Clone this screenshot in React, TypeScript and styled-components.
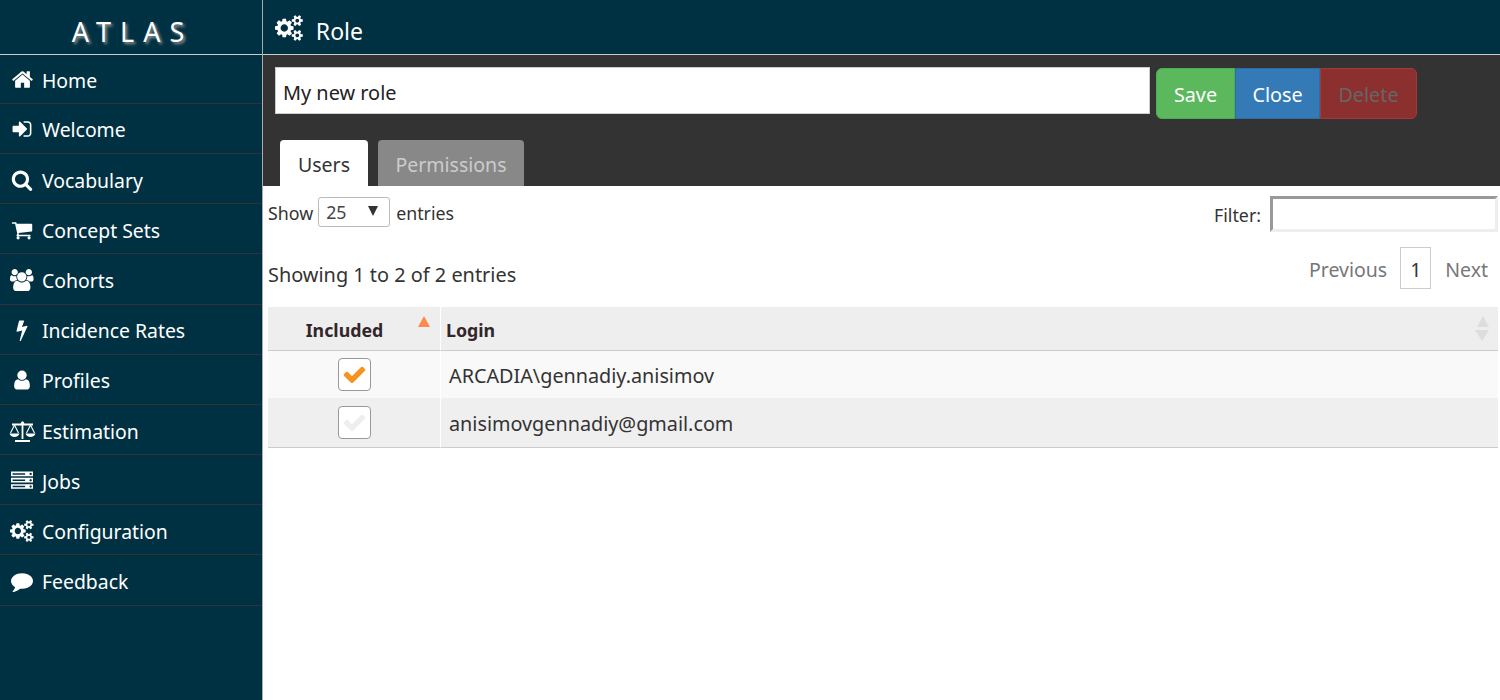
import React from "react";
import styled, { createGlobalStyle } from "styled-components";

const Global = createGlobalStyle`
  html, body { margin: 0; padding: 0; height: 100%; background: #fff; }
  #root { height: 700px; overflow: hidden; }
  * { box-sizing: border-box; }
  body { font-family: "Noto Sans", "Open Sans", sans-serif; }
`;

type IconDef = { w: number; d: string };
const icons: Record<string, IconDef> = {
  home: { w: 1792, d: "M1472 992v480q0 26-19 45t-45 19h-384v-384h-256v384h-384q-26 0-45-19t-19-45v-480q0-1 .5-3t.5-3l575-474 575 474q1 2 1 6zm223-69l-62 74q-8 9-21 11h-3q-13 0-21-7l-692-577-692 577q-12 8-24 7-13-2-21-11l-62-74q-8-10-7-23.5t11-21.5l719-599q32-26 76-26t76 26l244 204v-195q0-14 9-23t23-9h192q14 0 23 9t9 23v408l219 182q10 8 11 21.5t-7 23.5z" },
  signIn: { w: 1792, d: "M1312 896q0 26-19 45l-544 544q-19 19-45 19t-45-19-19-45v-288h-448q-26 0-45-19t-19-45v-384q0-26 19-45t45-19h448v-288q0-26 19-45t45-19 45 19l544 544q19 19 19 45zm352-352v704q0 119-84.5 203.5t-203.5 84.5h-320q-13 0-22.5-9.5t-9.5-22.5q0-4-1-20t-.5-26.5 3-23.5 10-19.5 20.5-6.5h320q66 0 113-47t47-113v-704q0-66-47-113t-113-47h-312l-11.5-1-11.5-3-8-5.5-7-9-2-13.5q0-4-1-20t-.5-26.5 3-23.5 10-19.5 20.5-6.5h320q119 0 203.5 84.5t84.5 203.5z" },
  search: { w: 1792, d: "M1216 832q0-185-131.5-316.5t-316.5-131.5-316.5 131.5-131.5 316.5 131.5 316.5 316.5 131.5 316.5-131.5 131.5-316.5zm512 832q0 52-38 90t-90 38q-54 0-90-38l-343-342q-179 124-399 124-143 0-273.5-55.5t-225-150-150-225-55.5-273.5 55.5-273.5 150-225 225-150 273.5-55.5 273.5 55.5 225 150 150 225 55.5 273.5q0 220-124 399l343 343q37 37 37 90z" },
  cart: { w: 1792, d: "M704 1536q0 52-38 90t-90 38-90-38-38-90 38-90 90-38 90 38 38 90zm896 0q0 52-38 90t-90 38-90-38-38-90 38-90 90-38 90 38 38 90zm128-1088v512q0 24-16.5 42.5t-40.5 21.5l-1044 122q13 60 13 70 0 16-24 64h920q26 0 45 19t19 45-19 45-45 19h-1024q-26 0-45-19t-19-45q0-11 8-31.5t16-36 21.5-40 15.5-29.5l-177-823h-204q-26 0-45-19t-19-45 19-45 45-19h256q16 0 28.5 6.5t19.5 15.5 13 24.5 8 26 5.5 29.5 4.5 26h1201q26 0 45 19t19 45z" },
  users: { w: 1920, d: "M593 896q-162 5-265 128h-134q-82 0-138-40.5t-56-118.5q0-353 124-353 6 0 43.5 21t97.5 42.5 119 21.5q67 0 133-23-5 37-5 66 0 139 81 256zm1071 637q0 120-73 189.5t-194 69.5h-874q-121 0-194-69.5t-73-189.5q0-53 3.5-103.5t14-109 26.5-108.5 43-97.5 62-81 85.5-53.5 111.5-20q10 0 43 21.5t73 48 107 48 135 21.5 135-21.5 107-48 73-48 43-21.5q61 0 111.5 20t85.5 53.5 62 81 43 97.5 26.5 108.5 14 109 3.5 103.5zm-1024-1277q0 106-75 181t-181 75-181-75-75-181 75-181 181-75 181 75 75 181zm704 384q0 159-112.5 271.5t-271.5 112.5-271.5-112.5-112.5-271.5 112.5-271.5 271.5-112.5 271.5 112.5 112.5 271.5zm576 225q0 78-56 118.5t-138 40.5h-134q-103-123-265-128 81-117 81-256 0-29-5-66 66 23 133 23 59 0 119-21.5t97.5-42.5 43.5-21q124 0 124 353zm-128-609q0 106-75 181t-181 75-181-75-75-181 75-181 181-75 181 75 75 181z" },
  bolt: { w: 1792, d: "M1333 566q18 20 7 44l-540 1157q-13 25-42 25-4 0-14-2-17-5-25.5-19t-4.5-30l197-808-406 101q-4 1-12 1-18 0-31-11-18-15-13-39l201-825q4-14 16-23t28-9h328q19 0 32 12.5t13 29.5q0 8-5 18l-171 463 396-98q8-2 12-2 19 0 34 15z" },
  user: { w: 1792, d: "M1536 1399q0 109-62.5 187t-150.5 78h-854q-88 0-150.5-78t-62.5-187q0-85 8.5-160.5t31.5-152 58.5-131 94-89 134.5-34.5q131 128 313 128t313-128q76 0 134.5 34.5t94 89 58.5 131 31.5 152 8.5 160.5zm-256-887q0 159-112.5 271.5t-271.5 112.5-271.5-112.5-112.5-271.5 112.5-271.5 271.5-112.5 271.5 112.5 112.5 271.5z" },
  server: { w: 1792, d: "M128 1408h1024v-128h-1024v128zm0-512h1024v-128h-1024v128zm1568 448q0-40-28-68t-68-28-68 28-28 68 28 68 68 28 68-28 28-68zm-1568-960h1024v-128h-1024v128zm1568 448q0-40-28-68t-68-28-68 28-28 68 28 68 68 28 68-28 28-68zm0-512q0-40-28-68t-68-28-68 28-28 68 28 68 68 28 68-28 28-68zm96 832v384h-1792v-384h1792zm0-512v384h-1792v-384h1792zm0-512v384h-1792v-384h1792z" },
  cogs: { w: 1920, d: "M896 896q0-106-75-181t-181-75-181 75-75 181 75 181 181 75 181-75 75-181zm768 512q0-52-38-90t-90-38-90 38-38 90q0 53 37.5 90.5t90.5 37.5 90.5-37.5 37.5-90.5zm0-1024q0-52-38-90t-90-38-90 38-38 90q0 53 37.5 90.5t90.5 37.5 90.5-37.5 37.5-90.5zm-384 421v185q0 10-7 19.5t-16 10.5l-155 24q-11 35-32 76 34 48 90 115 7 11 7 20 0 12-7 19-23 30-82.5 89.5t-78.5 59.5q-11 0-21-7l-115-90q-37 19-77 31-11 108-23 155-7 24-30 24h-186q-11 0-20-7.5t-10-17.5l-23-153q-34-10-75-31l-118 89q-7 7-20 7-11 0-21-8-144-133-144-160 0-9 7-19 10-14 41-53t47-61q-23-44-35-82l-152-24q-10-1-17-9.5t-7-19.5v-185q0-10 7-19.5t16-10.5l155-24q11-35 32-76-34-48-90-115-7-11-7-20 0-12 7-20 22-30 82-89t79-59q11 0 21 7l115 90q34-18 77-32 11-108 23-154 7-24 30-24h186q11 0 20 7.5t10 17.5l23 153q34 10 75 31l118-89q8-7 20-7 11 0 21 8 144 133 144 160 0 8-7 19-12 16-42 54t-45 60q23 48 34 82l152 23q10 2 17 10.5t7 19.5zm640 533v140q0 16-149 31-12 27-30 52 51 113 51 138 0 4-4 7-122 71-124 71-8 0-46-47t-52-68q-20 2-30 2t-30-2q-14 21-52 68t-46 47q-2 0-124-71-4-3-4-7 0-25 51-138-18-25-30-52-149-15-149-31v-140q0-16 149-31 13-29 30-52-51-113-51-138 0-4 4-7 4-2 35-20t59-34 30-16q8 0 46 46.5t52 67.5q20-2 30-2t30 2q51-71 92-112l6-2q4 0 124 70 4 3 4 7 0 25-51 138 17 23 30 52 149 15 149 31zm0-1024v140q0 16-149 31-12 27-30 52 51 113 51 138 0 4-4 7-122 71-124 71-8 0-46-47t-52-68q-20 2-30 2t-30-2q-14 21-52 68t-46 47q-2 0-124-71-4-3-4-7 0-25 51-138-18-25-30-52-149-15-149-31v-140q0-16 149-31 13-29 30-52-51-113-51-138 0-4 4-7 4-2 35-20t59-34 30-16q8 0 46 46.5t52 67.5q20-2 30-2t30 2q51-71 92-112l6-2q4 0 124 70 4 3 4 7 0 25-51 138 17 23 30 52 149 15 149 31z" },
  comment: { w: 1792, d: "M1792 896q0 174-120 321.5t-326 233-450 85.5q-70 0-145-8-198 175-460 242-49 14-114 22-17 2-30.5-9t-17.5-29v-1q-3-4-.5-12t2-10 4.5-9.5l6-9 7-8.5 8-9q7-8 31-34.5t34.5-38 31-39.5 32.5-51 27-59 26-76q-157-89-247.5-220t-90.5-281q0-130 71-248.5t191-204.5 286-136.5 348-50.5q244 0 450 85.5t326 233 120 321.5z" },
  check: { w: 1792, d: "M1671 566q0 40-28 68l-724 724-136 136q-28 28-68 28t-68-28l-136-136-362-362q-28-28-28-68t28-68l136-136q28-28 68-28t68 28l294 295 656-657q28-28 68-28t68 28l136 136q28 28 28 68z" },
};

const Glyph = ({ name, size }: { name: string; size: number }) => {
  const ic = icons[name];
  return (
    <svg width={(size * ic.w) / 1792} height={size} viewBox={`0 0 ${ic.w} 1792`} fill="currentColor">
      <path d={ic.d} />
    </svg>
  );
};

const ScaleIcon = () => (
  <svg width="27" height="22" viewBox="0 0 27 22" fill="none" stroke="currentColor">
    <path d="M13.5 1.5V19M3 4.5h21M6 21h15" strokeWidth="1.8" />
    <path d="M5.5 5L1.5 13M5.5 5l4 8M21.5 5l-4 8M21.5 5l4 8" strokeWidth="1.1" />
    <path d="M0.5 13.5h10c-.6 2.2-2.6 3.5-5 3.5s-4.4-1.3-5-3.5zM16.5 13.5h10c-.6 2.2-2.6 3.5-5 3.5s-4.4-1.3-5-3.5z" fill="currentColor" stroke="none" />
    <circle cx="13.5" cy="3.5" r="1.8" fill="currentColor" stroke="none" />
  </svg>
);

const Page = styled.div`
  display: flex;
  height: 700px;
  width: 1500px;
`;
const Sidebar = styled.nav`
  width: 263px;
  flex: none;
  background: #003142;
  border-right: 1px solid #aaa;
  color: #fff;
`;
const Brand = styled.div`
  height: 55px;
  border-bottom: 1px solid #ccc;
  text-align: center;
  font-size: 27px;
  line-height: 64px;
  letter-spacing: 9px;
  text-shadow: 2px 2px 3px #999;
  color: #fff;
  padding-left: 3px;
`;
const NavItem = styled.a`
  display: flex;
  align-items: center;
  height: 50.2px;
  border-bottom: 1px solid #333;
  font-size: 19.4px;
  color: #fff;
  padding-top: 3px;
  &:nth-child(2) { height: 48.8px; }
`;
const NavIcon = styled.span`
  width: 42px;
  flex: none;
  display: flex;
  justify-content: center;
  padding-left: 2px;
  svg { display: block; margin-top: -1px; }
`;
const Main = styled.main`
  flex: 1;
  min-width: 0;
  display: flex;
  flex-direction: column;
`;
const TitleBar = styled.header`
  height: 55px;
  background: #003142;
  border-bottom: 1px solid #ccc;
  color: #fff;
  display: flex;
  align-items: center;
  gap: 13px;
  padding: 8px 0 0 12px;
  font-size: 23px;
  svg { display: block; margin-top: -6px; }
`;
const Panel = styled.section`
  height: 131px;
  background: #333;
  padding: 12px 12px 0;
  display: flex;
  flex-direction: column;
`;
const FormRow = styled.div`
  display: flex;
  gap: 6px;
  align-items: flex-start;
`;
const NameInput = styled.div`
  width: 875px;
  height: 47px;
  background: #fff;
  border: 1px solid #ccc;
  color: #222;
  font-size: 19.9px;
  line-height: 49px;
  padding-left: 7px;
`;
const ButtonGroup = styled.div`
  display: flex;
  margin-top: 1px;
`;
const Btn = styled.button<{ $bg: string; $border: string; $w: number; $color?: string }>`
  width: ${(p) => p.$w}px;
  height: 51px;
  background: ${(p) => p.$bg};
  border: 1px solid ${(p) => p.$border};
  color: ${(p) => p.$color || "#fff"};
  font: inherit;
  font-size: 19.8px;
  padding: 2px 0 0;
  &:first-child { border-radius: 6px 0 0 6px; }
  &:last-child { border-radius: 0 6px 6px 0; }
`;
const Tabs = styled.div`
  display: flex;
  gap: 10px;
  margin-top: 21px;
  padding-left: 5px;
`;
const Tab = styled.div<{ $active?: boolean; $w: number }>`
  width: ${(p) => p.$w}px;
  height: 46px;
  border-radius: 4px 4px 0 0;
  background: ${(p) => (p.$active ? "#fff" : "#888")};
  color: ${(p) => (p.$active ? "#333" : "#ccc")};
  font-size: 19.5px;
  line-height: 50px;
  text-align: center;
`;
const Content = styled.section`
  flex: 1;
  padding: 10px 2px 0 5px;
  color: #333;
  font-size: 17.8px;
`;
const TopRow = styled.div`
  display: flex;
  justify-content: space-between;
  align-items: center;
  height: 36px;
`;
const LengthControl = styled.div`
  display: flex;
  align-items: center;
  padding-bottom: 2px;
`;
const FilterControl = styled.div`
  display: flex;
  align-items: center;
  padding-top: 1px;
`;
const SelectBox = styled.div`
  position: relative;
  width: 72px;
  height: 30px;
  margin: 0 6px 2px 5px;
  border: 1px solid #bbb;
  border-radius: 3px;
  line-height: 28px;
  padding-left: 7px;
  color: #444;
`;
const Caret = styled.span`
  position: absolute;
  right: 11px;
  top: 8px;
  border-left: 5.5px solid transparent;
  border-right: 5.5px solid transparent;
  border-top: 10px solid #333;
`;
const FilterInput = styled.div`
  width: 228px;
  height: 36px;
  margin: -1px 0 0 9px;
  border: 3px solid;
  border-color: #999 #eee #eee #999;
  background: #fff;
`;
const InfoRow = styled.div`
  display: flex;
  justify-content: space-between;
  margin-top: 15px;
  height: 60px;
  font-size: 19.9px;
`;
const Info = styled.div`
  padding-top: 12px;
  line-height: 32px;
`;
const Pager = styled.div`
  display: flex;
  height: 42px;
  align-items: center;
  color: #777;
  padding-right: 10px;
  font-size: 19.5px;
`;
const PagerLabel = styled.span`
  padding-top: 2px;
`;
const PageNum = styled.span`
  width: 31px;
  height: 42px;
  margin: 0 14px 0 13px;
  border: 1px solid #ccc;
  color: #333;
  text-align: center;
  line-height: 44px;
`;
const TableGrid = styled.div`
  display: grid;
  grid-template-columns: 173px 1fr;
  width: 1230px;
`;
const HeadCell = styled.div<{ $center?: boolean }>`
  position: relative;
  height: 44px;
  background: #eee;
  border-bottom: 1px solid #ccc;
  font-weight: 700;
  font-size: 17.8px;
  color: #33262a;
  line-height: 46px;
  padding-left: ${(p) => (p.$center ? "0" : "5px")};
  text-align: ${(p) => (p.$center ? "center" : "left")};
  ${(p) => (p.$center ? "border-right: 1px solid #fff; padding-right: 19px;" : "")}
`;
const SortUp = styled.span<{ $c: string; $t: number; $r: number }>`
  position: absolute;
  right: ${(p) => p.$r}px;
  top: ${(p) => p.$t}px;
  border-left: 6.5px solid transparent;
  border-right: 6.5px solid transparent;
  border-bottom: 11px solid ${(p) => p.$c};
`;
const SortDown = styled.span`
  position: absolute;
  right: 9px;
  top: 23px;
  border-left: 7px solid transparent;
  border-right: 7px solid transparent;
  border-top: 11px solid #ddd;
`;
const Cell = styled.div<{ $alt?: boolean; $center?: boolean }>`
  height: ${(p) => (p.$alt ? 50 : 47)}px;
  background: ${(p) => (p.$alt ? "#efefef" : "#f9f9f9")};
  ${(p) => (p.$alt ? "border-bottom: 1px solid #ccc;" : "")}
  ${(p) => (p.$center ? `border-right: 1px solid #fff; display: flex; justify-content: center; padding-top: ${p.$alt ? 8 : 7}px;` : "padding-left: 8px;")}
  font-size: 19.8px;
  line-height: ${(p) => (p.$alt ? 52 : 50)}px;
  color: #333;
`;
const CheckBox = styled.span<{ $on?: boolean }>`
  width: 33px;
  height: 33px;
  border: 1px solid #999;
  border-radius: 4px;
  background: #fff;
  display: flex;
  align-items: center;
  justify-content: center;
  color: ${(p) => (p.$on ? "#f7931e" : "#eee")};
`;

const items: [string, string, number][] = [
  ["home", "Home", 23],
  ["signIn", "Welcome", 22],
  ["search", "Vocabulary", 22],
  ["cart", "Concept Sets", 22],
  ["users", "Cohorts", 22],
  ["bolt", "Incidence Rates", 22],
  ["user", "Profiles", 22],
  ["scale", "Estimation", 0],
  ["server", "Jobs", 22],
  ["cogs", "Configuration", 22],
  ["comment", "Feedback", 22],
];

export default function App() {
  return (
    <Page>
      <Global />
      <Sidebar>
        <Brand>ATLAS</Brand>
        {items.map(([name, label, size]) => (
          <NavItem key={label}>
            <NavIcon>{name === "scale" ? <ScaleIcon /> : <Glyph name={name} size={size} />}</NavIcon>
            {label}
          </NavItem>
        ))}
      </Sidebar>
      <Main>
        <TitleBar><Glyph name="cogs" size={26} />Role</TitleBar>
        <Panel>
          <FormRow>
            <NameInput>My new role</NameInput>
            <ButtonGroup>
              <Btn $bg="#5cb85c" $border="#4cae4c" $w={79}>Save</Btn>
              <Btn $bg="#337ab7" $border="#2e6da4" $w={85}>Close</Btn>
              <Btn $bg="#8c2f2f" $border="#a33a38" $w={97} $color="#666">Delete</Btn>
            </ButtonGroup>
          </FormRow>
          <Tabs>
            <Tab $active $w={88}>Users</Tab>
            <Tab $w={146}>Permissions</Tab>
          </Tabs>
        </Panel>
        <Content>
          <TopRow>
            <LengthControl>
              Show
              <SelectBox>25<Caret /></SelectBox>
              entries
            </LengthControl>
            <FilterControl>
              Filter:
              <FilterInput />
            </FilterControl>
          </TopRow>
          <InfoRow>
            <Info>Showing 1 to 2 of 2 entries</Info>
            <Pager>
              <PagerLabel>Previous</PagerLabel>
              <PageNum>1</PageNum>
              <PagerLabel>Next</PagerLabel>
            </Pager>
          </InfoRow>
          <TableGrid>
            <HeadCell $center>Included<SortUp $c="#ff8a4c" $t={9} $r={10} /></HeadCell>
            <HeadCell>Login<SortUp $c="#ddd" $t={9} $r={9.5} /><SortDown /></HeadCell>
            <Cell $center><CheckBox $on><Glyph name="check" size={25} /></CheckBox></Cell>
            <Cell>ARCADIA\gennadiy.anisimov</Cell>
            <Cell $center $alt><CheckBox><Glyph name="check" size={25} /></CheckBox></Cell>
            <Cell $alt>anisimovgennadiy@gmail.com</Cell>
          </TableGrid>
        </Content>
      </Main>
    </Page>
  );
}
